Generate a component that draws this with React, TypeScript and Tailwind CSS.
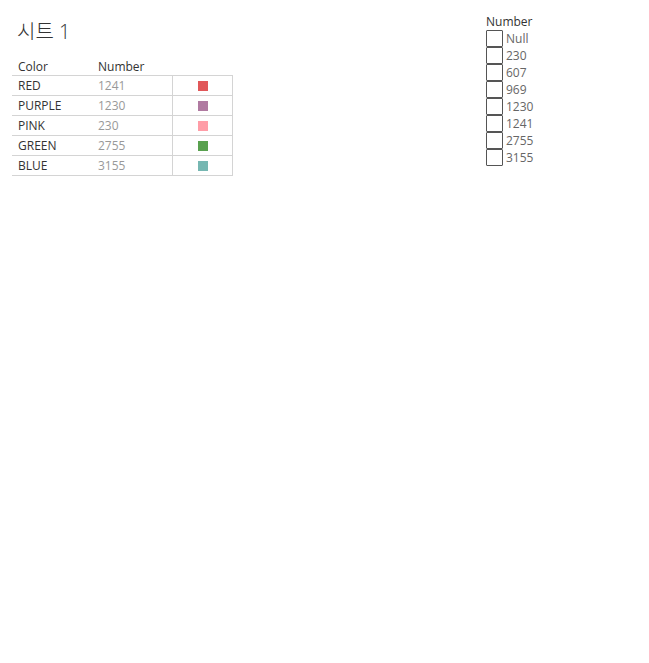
import React from 'react';

interface Row {
  color: string;
  value: number;
  swatch: string;
}

const rows: Row[] = [
  { color: 'RED', value: 1241, swatch: 'bg-[#e15759]' },
  { color: 'PURPLE', value: 1230, swatch: 'bg-[#b07aa1]' },
  { color: 'PINK', value: 230, swatch: 'bg-[#ff9da7]' },
  { color: 'GREEN', value: 2755, swatch: 'bg-[#59a14f]' },
  { color: 'BLUE', value: 3155, swatch: 'bg-[#76b7b2]' },
];

const filterValues = ['Null', '230', '607', '969', '1230', '1241', '2755', '3155'];

const App: React.FC = () => {
  return (
    <div className="flex min-h-[663px] w-[649px] bg-white font-['Open_Sans','Noto_Sans_CJK_KR',sans-serif]">
      {/* Sheet */}
      <div className="w-[474px] pl-3 pt-[19px]">
        <h1 className="pl-[5px] text-[20px] font-light leading-[26px] text-[#333]">
          시트 1
        </h1>

        <div className="mt-[14px] w-[221px]">
          {/* Header */}
          <div className="flex h-[16px] items-end text-[12px] leading-[16px] text-[#333]">
            <div className="w-[86px] pl-[6px]">Color</div>
            <div>Number</div>
          </div>

          {/* Rows */}
          <div className="border-t border-[#d4d4d4]">
            {rows.map((row) => (
              <div
                key={row.color}
                className="flex h-[20px] border-b border-[#d4d4d4] text-[12px] leading-[19px]"
              >
                <div className="w-[86px] pl-[6px] text-[#333]">{row.color}</div>
                <div className="w-[74px] text-[#999]">{row.value}</div>
                <div className="flex flex-1 items-center justify-center border-x border-[#d4d4d4]">
                  <div className={`h-[10px] w-[10px] ${row.swatch}`} />
                </div>
              </div>
            ))}
          </div>
        </div>
      </div>

      {/* Filter card */}
      <div className="pt-[14px] pl-3">
        <div className="text-[12px] leading-[16px] text-[#333]">Number</div>
        <div className="flex flex-col">
          {filterValues.map((v) => (
            <label key={v} className="flex h-[17px] items-center">
              <span className="h-[17px] w-[17px] rounded-[1px] border border-[#555] bg-white" />
              <span className="ml-[3px] text-[12px] leading-[17px] text-[#666]">{v}</span>
            </label>
          ))}
        </div>
      </div>
    </div>
  );
};

export default App;
